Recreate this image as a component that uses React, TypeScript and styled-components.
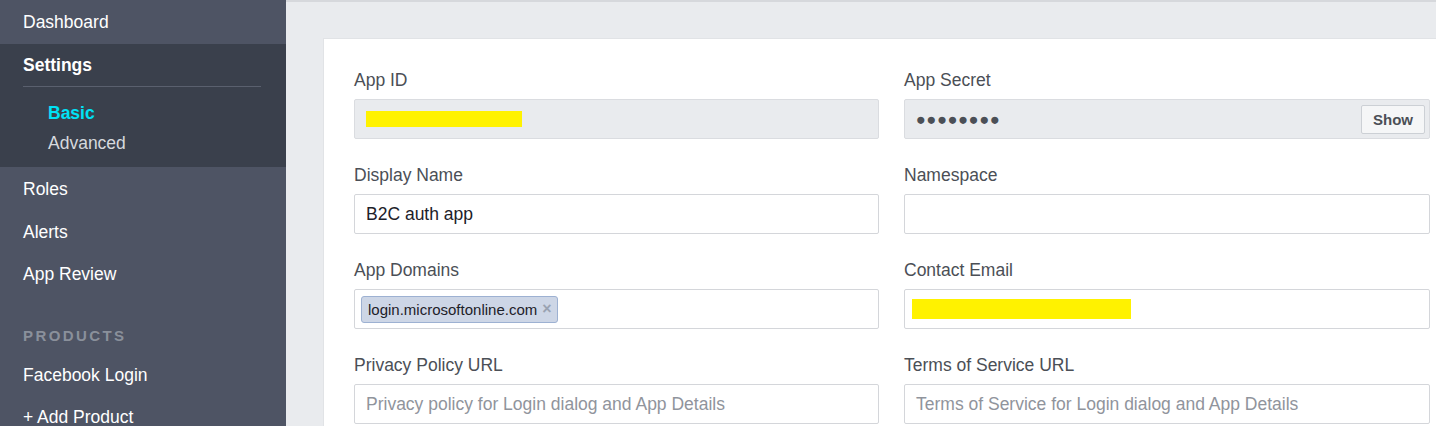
import * as React from 'react';
import styled, { createGlobalStyle } from 'styled-components';

const GlobalStyle = createGlobalStyle`
  html, body {
    margin: 0;
    padding: 0;
    overflow: hidden;
  }
  body {
    font-family: "Liberation Sans", Arial, Helvetica, sans-serif;
  }
`;

const COLOR = {
  SIDEBAR: '#4e5464',
  SIDEBAR_DARK: '#3a404c',
  ACTIVE: '#00e1f5',
  PAGE: '#e9ebee',
  TEXT: '#4b4f56',
  DARK_TEXT: '#1d2129',
  BORDER: '#d4d6da',
  PLACEHOLDER: '#90949c',
  REDACT: '#fff200',
};

const BASE_FONT = '17.5px';

const Layout = styled.div`
  display: flex;
  height: 426px;
  width: 1436px;
  overflow: hidden;
`;

const Sidebar = styled.nav`
  width: 286px;
  flex: 0 0 286px;
  background: ${COLOR.SIDEBAR};
  display: flex;
  flex-direction: column;
  overflow: hidden;

  & > * {
    flex-shrink: 0;
  }
`;

const NavItem = styled.div<{ $height?: number; $offset?: number }>`
  height: ${(p) => p.$height || 42.5}px;
  box-sizing: border-box;
  display: flex;
  align-items: center;
  padding: ${(p) => (p.$offset === undefined ? 3 : p.$offset)}px 0 0 23px;
  color: #ffffff;
  font-size: ${BASE_FONT};
`;

const SettingsGroup = styled.div`
  background: ${COLOR.SIDEBAR_DARK};
  padding-bottom: 9px;
`;

const GroupTitle = styled.div`
  margin: 0 25px 0 23px;
  height: 41px;
  display: flex;
  align-items: center;
  padding-top: 1px;
  color: #ffffff;
  font-size: ${BASE_FONT};
  font-weight: bold;
  border-bottom: 1px solid #5a606e;
`;

const SubItems = styled.div`
  padding-top: 11px;
`;

const SubItem = styled.div<{ $active?: boolean }>`
  height: 30px;
  display: flex;
  align-items: center;
  padding-left: 48px;
  font-size: ${BASE_FONT};
  font-weight: ${(p) => (p.$active ? 'bold' : 'normal')};
  color: ${(p) => (p.$active ? COLOR.ACTIVE : '#d6d9de')};
`;

const SectionHeader = styled.div`
  padding: 31px 23px 7px;
  line-height: 20px;
  font-size: 15px;
  font-weight: bold;
  letter-spacing: 2.4px;
  color: #8a909b;
`;

const Main = styled.main`
  flex: 1 1 auto;
  background: ${COLOR.PAGE};
  border-top: 2px solid #d6d8dc;
  padding: 36px 0 0 37px;
  overflow: hidden;
`;

const Card = styled.section`
  width: 1160px;
  min-height: 420px;
  background: #ffffff;
  border: 1px solid #e1e3e6;
  border-right: none;
  padding: 31px 0 0 30px;
  box-sizing: border-box;
`;

const FieldGrid = styled.div`
  display: grid;
  grid-template-columns: 525px 526px;
  column-gap: 25px;
  row-gap: 26px;
`;

const Field = styled.div`
  display: flex;
  flex-direction: column;
`;

const Label = styled.label`
  font-size: ${BASE_FONT};
  line-height: 20px;
  color: ${COLOR.TEXT};
  margin-bottom: 9px;
`;

const InputBox = styled.div<{ $readOnly?: boolean }>`
  height: 40px;
  box-sizing: border-box;
  border: 1px solid ${(p) => (p.$readOnly ? '#dadce0' : COLOR.BORDER)};
  border-radius: 2px;
  background: ${(p) => (p.$readOnly ? COLOR.PAGE : '#ffffff')};
  display: flex;
  align-items: center;
  padding: 0 4px 0 11px;
  font-size: ${BASE_FONT};
  color: ${COLOR.DARK_TEXT};
`;

const Placeholder = styled.span`
  color: ${COLOR.PLACEHOLDER};
`;

const Redacted = styled.span<{ $width: number; $height: number; $shift?: number }>`
  display: inline-block;
  width: ${(p) => p.$width}px;
  height: ${(p) => p.$height}px;
  margin-left: ${(p) => p.$shift || 0}px;
  background: ${COLOR.REDACT};
`;

const Dots = styled.span`
  flex: 1;
  font-size: 16.5px;
  letter-spacing: 0.6px;
  color: ${COLOR.TEXT};
`;

const ShowButton = styled.button`
  height: 29px;
  padding: 0 11px;
  border: 1px solid #ccd0d5;
  border-radius: 2px;
  background: #f5f6f7;
  color: ${COLOR.TEXT};
  font-family: inherit;
  font-size: 15px;
  font-weight: bold;
`;

const Tag = styled.span`
  display: inline-flex;
  align-items: center;
  gap: 5px;
  height: 27px;
  box-sizing: border-box;
  margin-left: -5px;
  padding: 0 5px 0 6px;
  background: #cdd6e6;
  border: 1px solid #9db1d2;
  border-radius: 3px;
  font-size: 15px;
  color: ${COLOR.DARK_TEXT};
`;

const TagClose = styled.span`
  font-size: 16px;
  font-weight: bold;
  color: #9aa3b2;
`;

export default function App() {
  return (
    <Layout>
      <GlobalStyle />
      <Sidebar>
        <NavItem $height={44} $offset={1}>Dashboard</NavItem>
        <SettingsGroup>
          <GroupTitle>Settings</GroupTitle>
          <SubItems>
            <SubItem $active>Basic</SubItem>
            <SubItem>Advanced</SubItem>
          </SubItems>
        </SettingsGroup>
        <NavItem>Roles</NavItem>
        <NavItem>Alerts</NavItem>
        <NavItem>App Review</NavItem>
        <SectionHeader>PRODUCTS</SectionHeader>
        <NavItem>Facebook Login</NavItem>
        <NavItem>+ Add Product</NavItem>
      </Sidebar>
      <Main>
        <Card>
          <FieldGrid>
            <Field>
              <Label>App ID</Label>
              <InputBox $readOnly>
                <Redacted $width={156} $height={16} />
              </InputBox>
            </Field>
            <Field>
              <Label>App Secret</Label>
              <InputBox $readOnly>
                <Dots>●●●●●●●●</Dots>
                <ShowButton>Show</ShowButton>
              </InputBox>
            </Field>
            <Field>
              <Label>Display Name</Label>
              <InputBox>B2C auth app</InputBox>
            </Field>
            <Field>
              <Label>Namespace</Label>
              <InputBox />
            </Field>
            <Field>
              <Label>App Domains</Label>
              <InputBox>
                <Tag>
                  login.microsoftonline.com
                  <TagClose>×</TagClose>
                </Tag>
              </InputBox>
            </Field>
            <Field>
              <Label>Contact Email</Label>
              <InputBox>
                <Redacted $width={219} $height={20} $shift={-4} />
              </InputBox>
            </Field>
            <Field>
              <Label>Privacy Policy URL</Label>
              <InputBox>
                <Placeholder>Privacy policy for Login dialog and App Details</Placeholder>
              </InputBox>
            </Field>
            <Field>
              <Label>Terms of Service URL</Label>
              <InputBox>
                <Placeholder>Terms of Service for Login dialog and App Details</Placeholder>
              </InputBox>
            </Field>
          </FieldGrid>
        </Card>
      </Main>
    </Layout>
  );
}
